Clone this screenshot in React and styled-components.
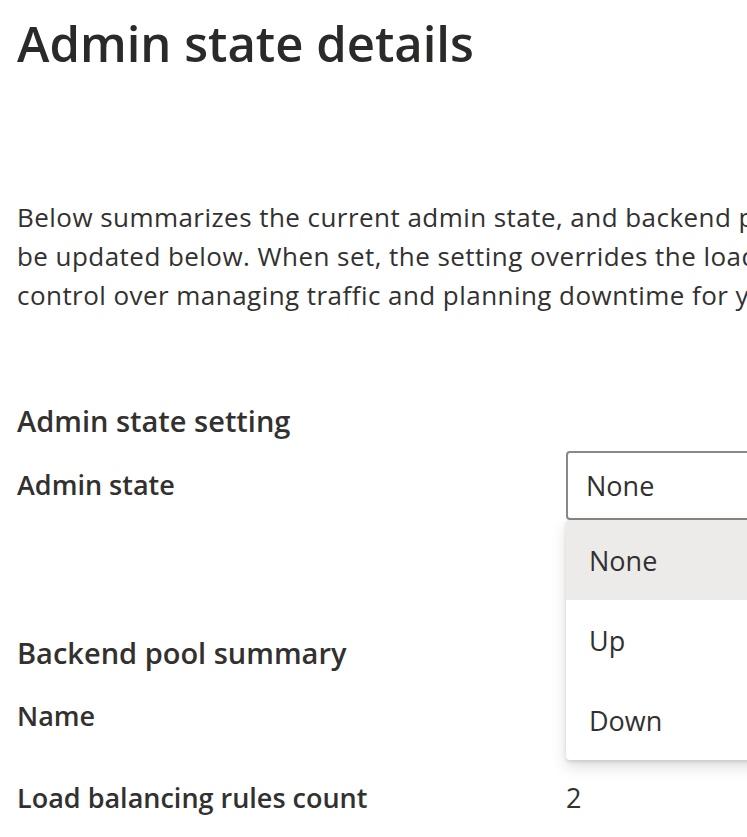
import React from "react";
import styled, { createGlobalStyle } from "styled-components";

const GlobalStyle = createGlobalStyle`
  html, body {
    margin: 0;
    padding: 0;
    background: #ffffff;
    overflow: hidden;
  }
  body {
    font-family: "Open Sans", "Noto Sans", sans-serif;
    color: #323130;
  }
`;

const Page = styled.div`
  width: 1200px;
  padding: 7px 0 0 17px;
`;

const Title = styled.h1`
  margin: 0;
  font-size: 49px;
  line-height: 72px;
  font-weight: 600;
  color: #2b2a29;
`;

const Intro = styled.p`
  margin: 119px 0 0;
  font-size: 26px;
  line-height: 39px;
  letter-spacing: 0.45px;
  font-weight: 400;
`;

const IntroLine = styled.span`
  display: block;
  white-space: nowrap;
`;

const Section = styled.section`
  margin-top: ${(p) => p.$gap}px;
`;

const SectionTitle = styled.h2`
  margin: 0;
  font-size: 29px;
  line-height: 40px;
  font-weight: 600;
`;

const Row = styled.div`
  display: grid;
  grid-template-columns: 549px 1fr;
  margin-top: ${(p) => p.$gap || 0}px;
`;

const Label = styled.div`
  font-size: 27px;
  line-height: 39px;
  font-weight: 600;
  padding-top: ${(p) => p.$pad || 0}px;
`;

const Value = styled.div`
  font-size: 27px;
  line-height: 39px;
`;

const DropdownWrap = styled.div`
  position: relative;
  width: 600px;
`;

const DropdownBox = styled.div`
  box-sizing: border-box;
  height: 69px;
  border: 2px solid #8a8886;
  border-radius: 4px;
  padding: 0 18px;
  display: flex;
  align-items: center;
  font-size: 27px;
  background: #ffffff;
`;

const Menu = styled.ul`
  position: absolute;
  top: 69px;
  left: 0;
  width: 600px;
  margin: 0;
  padding: 0;
  list-style: none;
  background: #ffffff;
  border-radius: 4px;
  box-shadow: 0 6.4px 14.4px rgba(0, 0, 0, 0.132),
    0 1.2px 3.6px rgba(0, 0, 0, 0.108);
  overflow: hidden;
  z-index: 2;
`;

const MenuItem = styled.li`
  height: 80px;
  display: flex;
  align-items: center;
  padding-left: 23px;
  font-size: 27px;
  background: ${(p) => (p.$selected ? "#edebe9" : "transparent")};
`;

const options = ["None", "Up", "Down"];

const App = () => {
  return (
    <Page>
      <GlobalStyle />
      <Title>Admin state details</Title>
      <Intro>
        <IntroLine>
          Below summarizes the current admin state, and backend pool details. Admin state can
        </IntroLine>
        <IntroLine>
          be updated below. When set, the setting overrides the load balancer health probe, giving you more
        </IntroLine>
        <IntroLine>
          control over managing traffic and planning downtime for your backend instances.
        </IntroLine>
      </Intro>

      <Section $gap={86}>
        <SectionTitle>Admin state setting</SectionTitle>
        <Row $gap={10}>
          <Label $pad={14}>Admin state</Label>
          <DropdownWrap>
            <DropdownBox>None</DropdownBox>
            <Menu>
              {options.map((o) => (
                <MenuItem key={o} $selected={o === "None"}>
                  {o}
                </MenuItem>
              ))}
            </Menu>
          </DropdownWrap>
        </Row>
      </Section>

      <Section $gap={113}>
        <SectionTitle>Backend pool summary</SectionTitle>
        <Row $gap={23}>
          <Label>Name</Label>
          <Value></Value>
        </Row>
        <Row $gap={43}>
          <Label>Load balancing rules count</Label>
          <Value>2</Value>
        </Row>
      </Section>
    </Page>
  );
};

export default App;
